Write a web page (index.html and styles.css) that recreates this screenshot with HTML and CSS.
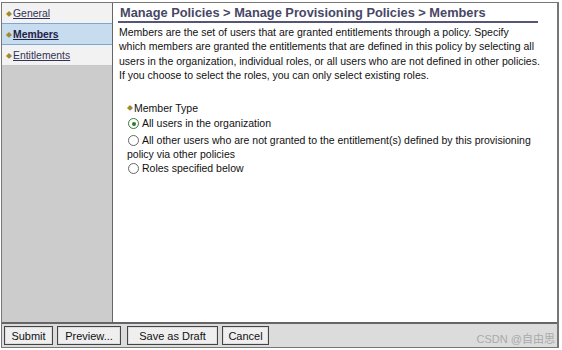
FILE: index.html
```html
<!DOCTYPE html>
<html>
<head>
<meta charset="utf-8">
<link rel="stylesheet" href="styles.css">
</head>
<body>
<div class="frame">
  <div class="body">
    <nav class="side">
      <a class="nav-item"><span class="mark">&#9670;</span><span class="lnk">General</span></a>
      <a class="nav-item active"><span class="mark">&#9670;</span><span class="lnk">Members</span></a>
      <a class="nav-item"><span class="mark">&#9670;</span><span class="lnk">Entitlements</span></a>
    </nav>
    <main class="main">
      <h1 class="title">Manage Policies &gt; Manage Provisioning Policies &gt; Members</h1>
      <p class="desc">Members are the set of users that are granted entitlements through a policy. Specify<br>which members are granted the entitlements that are defined in this policy by selecting all<br>users in the organization, individual roles, or all users who are not defined in other policies.<br>If you choose to select the roles, you can only select existing roles.</p>
      <div class="field">
        <div class="label"><span class="req">&#9670;</span>Member Type</div>
        <label class="opt"><span class="radio checked"></span>All users in the organization</label>
        <label class="opt o2"><span class="radio"></span>All other users who are not granted to the entitlement(s) defined by this provisioning policy via other policies</label>
        <label class="opt"><span class="radio"></span>Roles specified below</label>
      </div>
    </main>
  </div>
  <div class="bar">
    <button class="btn b1">Submit</button>
    <button class="btn b2">Preview...</button>
    <button class="btn b3">Save as Draft</button>
    <button class="btn b4">Cancel</button>
    <span class="wm">CSDN @自由思</span>
  </div>
</div>
</body>
</html>
```
FILE: styles.css
```css
html, body { margin: 0; padding: 0; background: #fff; }
body { font-family: "Liberation Sans", Arial, "Noto Sans CJK SC", sans-serif; font-size: 10.5px; color: #111; }
.frame {
  width: 558px; height: 346px; margin: 2px 0 0 1px;
  border: 1px solid #777; border-right: 2px solid #777;
  display: flex; flex-direction: column; box-sizing: border-box;
}
.body { flex: 1; display: flex; min-height: 0; }
.side { width: 110px; background: #cccccc; border-right: 1px solid #666; display: flex; flex-direction: column; }
.nav-item {
  height: 20px; background: #f2f2f2; border-bottom: 1px solid #c8c8c8;
  display: flex; align-items: center; padding-left: 4px; font-size: 10.4px; color: #333;
}
.nav-item .mark { color: #a08a30; font-size: 6px; margin-right: 1px; }
.nav-item .lnk { text-decoration: underline; color: #333355; }
.nav-item.active { background: #c8dcf0; border-top: 1px solid #7fa6d0; border-bottom: 1px solid #7fa6d0; margin-top: -1px; }
.nav-item.active .lnk { font-weight: bold; color: #222244; }
.main { flex: 1; padding: 2px 19px 0 5px; }
.title {
  margin: 0; font-size: 12.8px; font-weight: bold; color: #474766;
  border-bottom: 2px solid #555577; padding: 0 0 1px 2px; line-height: 15px;
}
.desc { margin: 2px -10px 0 1px; line-height: 14.3px; color: #111; white-space: nowrap; }
.field { margin-top: 19px; padding-left: 9px; line-height: 15px; }
.label { margin-bottom: 0; }
.req { color: #a08a30; font-size: 6px; margin-right: 1px; vertical-align: 2px; }
.opt { display: block; }
.o2 { margin-top: 2px; line-height: 14px; }
.radio {
  display: inline-block; width: 11px; height: 11px; border: 1px solid #666; border-radius: 50%;
  margin: 0 3px 0 1px; vertical-align: -2px; box-sizing: border-box; position: relative; background: #fff;
}
.radio.checked::after {
  content: ""; position: absolute; left: 2.5px; top: 2.5px; width: 4px; height: 4px; border-radius: 50%; background: #2a7a2a;
}
.radio.checked { border-color: #3a7a3a; }
.bar {
  height: 23px; background: #dcdcdc; border-top: 2px solid #666; display: flex; align-items: center;
  padding-left: 2px; gap: 4px; position: relative;
}
.btn {
  font-family: inherit; font-size: 11px; height: 19px; padding: 0; margin: 0;
  background: #efefef; border: 1px solid #444; box-shadow: inset 0 0 0 1px #ddd; color: #111;
}
.b1 { width: 49px; }
.b2 { width: 64px; margin-left: 0; }
.b3 { width: 91px; margin-left: 2px; }
.b4 { width: 47px; }
.wm { position: absolute; right: 2px; bottom: 1px; color: #aaa; font-size: 11px; }
```
